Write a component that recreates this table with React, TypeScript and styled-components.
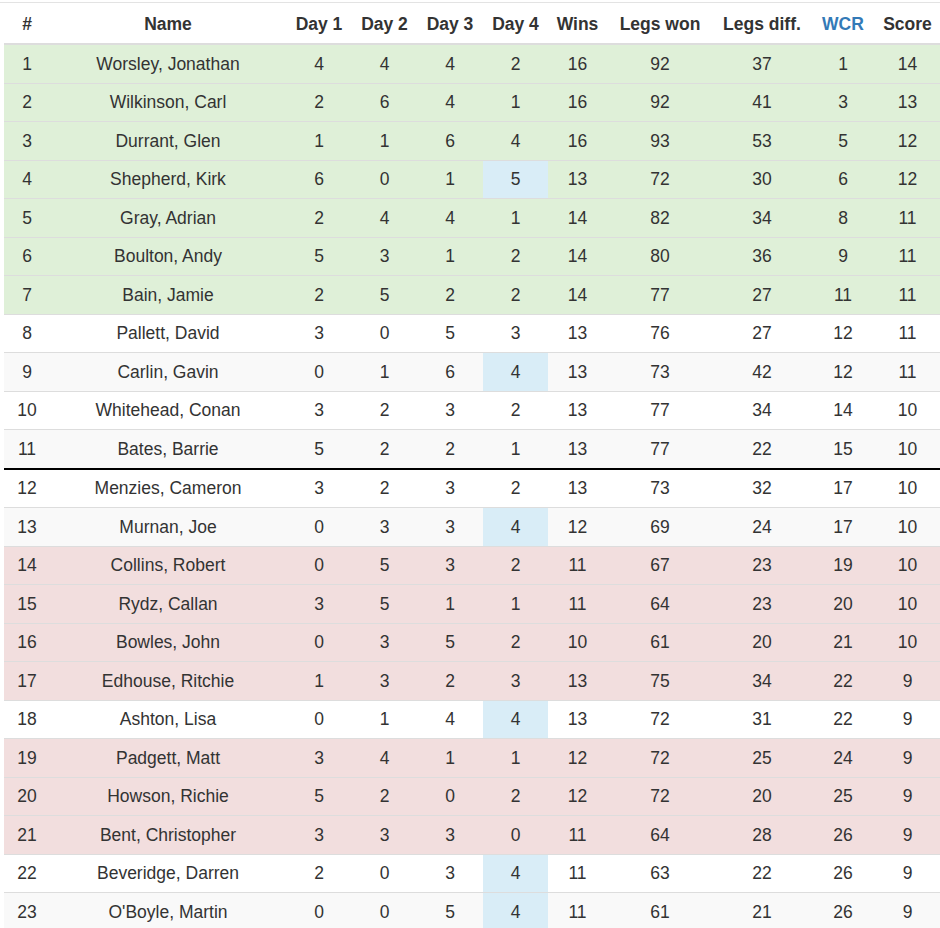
import React from "react";
import styled, { createGlobalStyle, css } from "styled-components";

const Global = createGlobalStyle`
  html, body { margin: 0; padding: 0; background: #fff; }
  body {
    font-family: "Liberation Sans", Arial, Helvetica, sans-serif;
    color: #333;
    font-size: 17.5px;
  }
`;

const Page = styled.div`
  padding-top: 2px;
`;

const TopRule = styled.div`
  border-top: 1px solid #e3e3e3;
`;

const Table = styled.table`
  margin-left: 4px;
  width: 936px;
  border-collapse: collapse;
  border-spacing: 0;
  table-layout: fixed;
`;

const Th = styled.th<{ $link?: boolean }>`
  padding: 10.5px 0 8px;
  line-height: 21.5px;
  font-weight: bold;
  text-align: center;
  border-bottom: 2px solid #ddd;
  white-space: nowrap;
  color: ${(p) => (p.$link ? "#337ab7" : "#333")};
`;

type Tone = "success" | "danger" | undefined;

const Row = styled.tr<{ $tone?: Tone; $cut?: boolean }>`
  ${(p) =>
    p.$tone === "success"
      ? css`background: #dff0d8;`
      : p.$tone === "danger"
      ? css`background: #f2dede;`
      : css`
          &:nth-of-type(odd) { background: #f9f9f9; }
        `}
  ${(p) =>
    p.$cut &&
    css`
      & > td { border-top: 2px solid #000; }
    `}
`;

const Td = styled.td<{ $info?: boolean }>`
  padding: 8.5px 0 7.5px;
  line-height: 21.5px;
  text-align: center;
  border-top: 1px solid #ddd;
  white-space: nowrap;
  ${(p) => p.$info && css`background: #d9edf7;`}
`;

const widths = [46, 236, 66, 65, 66, 65, 59, 106, 98, 64, 65];

type Player = {
  name: string;
  days: number[];
  wins: number;
  legs: number;
  diff: number;
  wcr: number;
  score: number;
};

const p = (
  name: string,
  d1: number, d2: number, d3: number, d4: number,
  wins: number, legs: number, diff: number, wcr: number, score: number
): Player => ({ name, days: [d1, d2, d3, d4], wins, legs, diff, wcr, score });

const players: Player[] = [
  p("Worsley, Jonathan", 4, 4, 4, 2, 16, 92, 37, 1, 14),
  p("Wilkinson, Carl", 2, 6, 4, 1, 16, 92, 41, 3, 13),
  p("Durrant, Glen", 1, 1, 6, 4, 16, 93, 53, 5, 12),
  p("Shepherd, Kirk", 6, 0, 1, 5, 13, 72, 30, 6, 12),
  p("Gray, Adrian", 2, 4, 4, 1, 14, 82, 34, 8, 11),
  p("Boulton, Andy", 5, 3, 1, 2, 14, 80, 36, 9, 11),
  p("Bain, Jamie", 2, 5, 2, 2, 14, 77, 27, 11, 11),
  p("Pallett, David", 3, 0, 5, 3, 13, 76, 27, 12, 11),
  p("Carlin, Gavin", 0, 1, 6, 4, 13, 73, 42, 12, 11),
  p("Whitehead, Conan", 3, 2, 3, 2, 13, 77, 34, 14, 10),
  p("Bates, Barrie", 5, 2, 2, 1, 13, 77, 22, 15, 10),
  p("Menzies, Cameron", 3, 2, 3, 2, 13, 73, 32, 17, 10),
  p("Murnan, Joe", 0, 3, 3, 4, 12, 69, 24, 17, 10),
  p("Collins, Robert", 0, 5, 3, 2, 11, 67, 23, 19, 10),
  p("Rydz, Callan", 3, 5, 1, 1, 11, 64, 23, 20, 10),
  p("Bowles, John", 0, 3, 5, 2, 10, 61, 20, 21, 10),
  p("Edhouse, Ritchie", 1, 3, 2, 3, 13, 75, 34, 22, 9),
  p("Ashton, Lisa", 0, 1, 4, 4, 13, 72, 31, 22, 9),
  p("Padgett, Matt", 3, 4, 1, 1, 12, 72, 25, 24, 9),
  p("Howson, Richie", 5, 2, 0, 2, 12, 72, 20, 25, 9),
  p("Bent, Christopher", 3, 3, 3, 0, 11, 64, 28, 26, 9),
  p("Beveridge, Darren", 2, 0, 3, 4, 11, 63, 22, 26, 9),
  p("O'Boyle, Martin", 0, 0, 5, 4, 11, 61, 21, 26, 9),
];

const successRows = new Set([1, 2, 3, 4, 5, 6, 7]);
const dangerRows = new Set([14, 15, 16, 17, 19, 20, 21]);
const infoRows = new Set([4, 9, 13, 18, 22, 23]);

const headers = ["#", "Name", "Day 1", "Day 2", "Day 3", "Day 4", "Wins", "Legs won", "Legs diff.", "WCR", "Score"];

export default function App() {
  return (
    <Page>
      <Global />
      <TopRule />
      <Table>
        <colgroup>
          {widths.map((w, i) => (
            <col key={i} style={{ width: w }} />
          ))}
        </colgroup>
        <thead>
          <tr>
            {headers.map((h) => (
              <Th key={h} $link={h === "WCR"}>
                {h}
              </Th>
            ))}
          </tr>
        </thead>
        <tbody>
          {players.map((pl, i) => {
            const rank = i + 1;
            const tone: Tone = successRows.has(rank)
              ? "success"
              : dangerRows.has(rank)
              ? "danger"
              : undefined;
            return (
              <Row key={rank} $tone={tone} $cut={rank === 12}>
                <Td>{rank}</Td>
                <Td>{pl.name}</Td>
                {pl.days.map((d, j) => (
                  <Td key={j} $info={j === 3 && infoRows.has(rank)}>
                    {d}
                  </Td>
                ))}
                <Td>{pl.wins}</Td>
                <Td>{pl.legs}</Td>
                <Td>{pl.diff}</Td>
                <Td>{pl.wcr}</Td>
                <Td>{pl.score}</Td>
              </Row>
            );
          })}
        </tbody>
      </Table>
    </Page>
  );
}
